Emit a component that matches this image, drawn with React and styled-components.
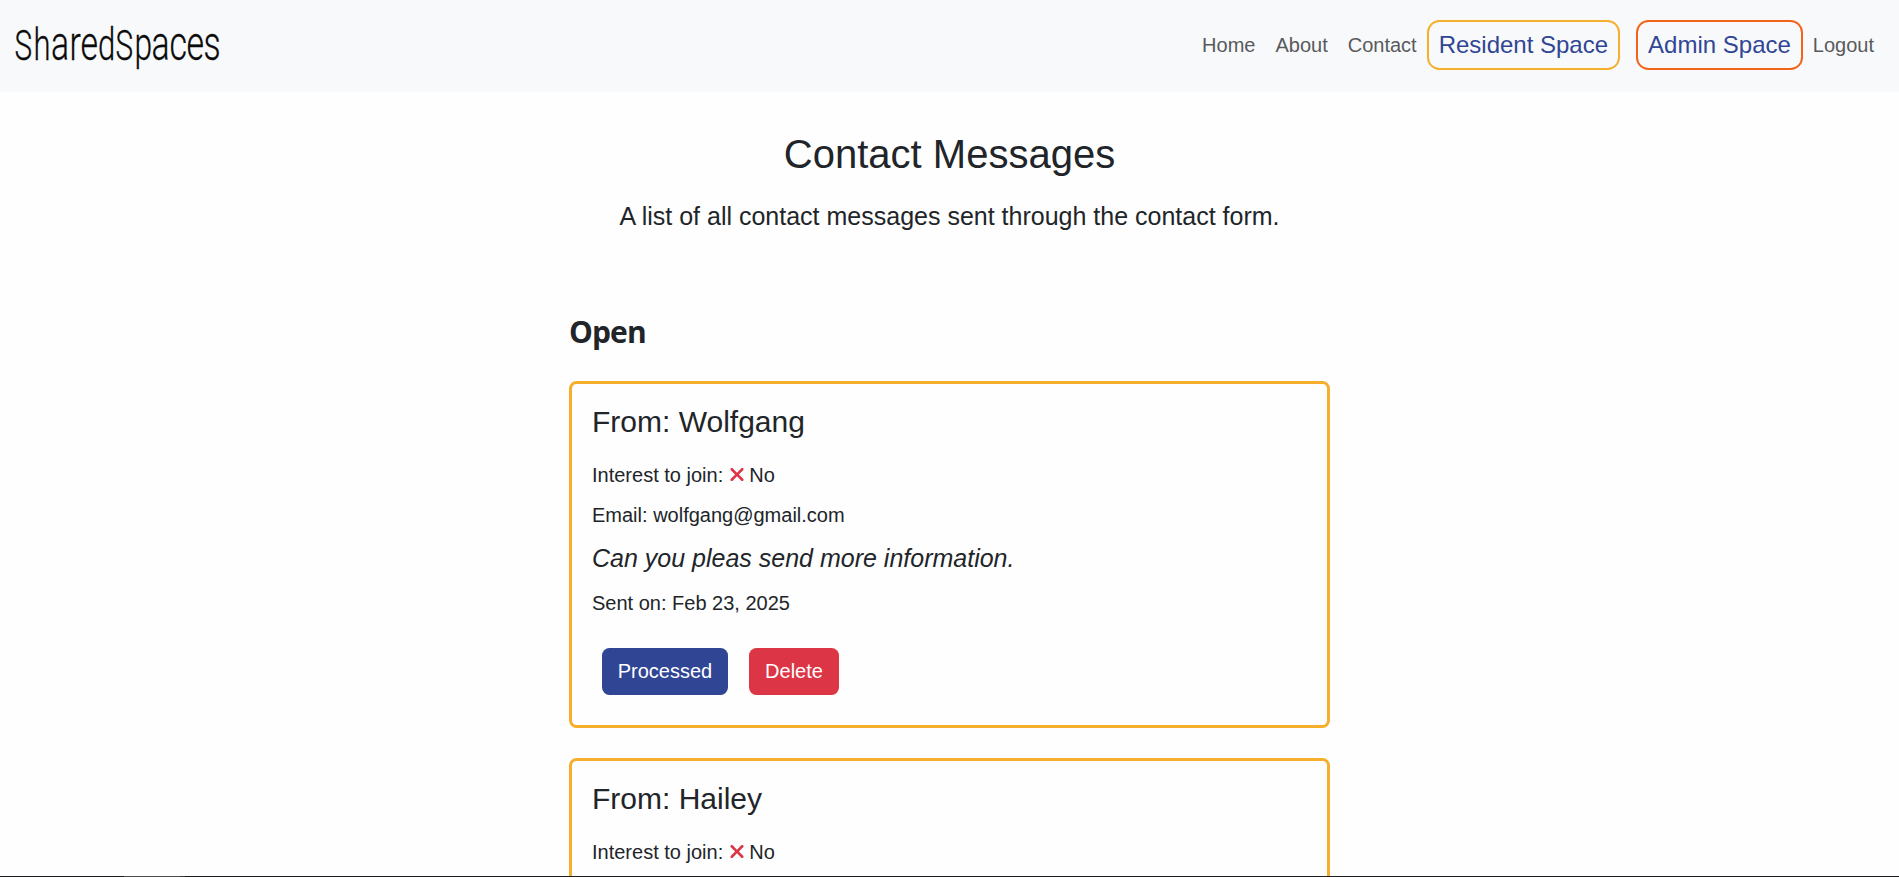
import React from "react";
import styled, { createGlobalStyle } from "styled-components";

const GlobalStyle = createGlobalStyle`
  * { box-sizing: border-box; }
  html, body { height: 100%; }
  body {
    margin: 0;
    overflow: hidden;
    background: #fefefe;
    color: #212529;
    font-family: "Liberation Sans", Arial, sans-serif;
    font-size: 20px;
    line-height: 30px;
  }
  h1, h2, h3, p { margin: 0; font-weight: 400; }
`;

const Page = styled.div`
  height: 877px;
  display: flex;
  flex-direction: column;
`;

const Navbar = styled.header`
  flex: none;
  height: 92px;
  padding: 20px 15px 22px;
  display: flex;
  justify-content: space-between;
  background: #f8f9fb;
`;

const Logo = styled.svg`
  display: block;
  width: 210px;
  height: 50px;
  overflow: visible;
  fill: #0b0b0b;
  stroke: #0b0b0b;
  stroke-width: 0.3px;
  font-family: Roboto, sans-serif;
  font-weight: 300;
`;

const NavLinks = styled.nav`
  display: flex;
  align-items: center;
`;

const NavLink = styled.a`
  padding: 0 10px;
  color: #595a5b;
`;

const SpaceLink = styled.a`
  height: 50px;
  padding: 0 10px;
  margin-right: ${(p) => p.$gap || 0}px;
  border: 2px solid ${(p) => p.$color};
  border-radius: 12.5px;
  color: #314595;
  font-size: 24px;
  line-height: 46px;
`;

const Main = styled.main`
  flex: 1;
  min-height: 0;
  overflow: hidden;
`;

const Intro = styled.section`
  padding-top: 38px;
  text-align: center;
`;

const Title = styled.h1`
  font-size: 40px;
  line-height: 48px;
  margin-bottom: 20px;
`;

const Lead = styled.p`
  font-size: 25px;
  line-height: 37px;
`;

const MessageList = styled.section`
  width: 761px;
  margin: 79px auto 0;
  display: flex;
  flex-direction: column;
  gap: 30px;
`;

const ListHeading = styled.h2`
  margin-bottom: 1px;
  font: 700 30px/36px "Open Sans", "Noto Sans", sans-serif;
  letter-spacing: -0.9px;
`;

const Card = styled.article`
  padding: 20px;
  border: 3px solid #f6ae2d;
  border-radius: 7.5px;
`;

const Sender = styled.h3`
  font-size: 30px;
  line-height: 36px;
  margin-bottom: 20px;
`;

const Detail = styled.p`
  margin-bottom: 10px;
`;

const MessageText = styled.p`
  font-size: 25px;
  font-style: italic;
  line-height: 37px;
  margin-bottom: 11px;
`;

const CrossIcon = styled.svg`
  width: 16px;
  height: 21px;
  margin-right: -1px;
  vertical-align: -3px;
  fill: #dc3545;
`;

const Actions = styled.div`
  display: flex;
  gap: 21px;
  padding: 20px 10px 10px;
`;

const Button = styled.button`
  width: ${(p) => p.$width}px;
  height: 47px;
  padding: 0 0 1px;
  border: 0;
  border-radius: 7.5px;
  background: ${(p) => p.$color};
  color: #fff;
  font: inherit;
`;

const BottomEdge = styled.footer`
  flex: none;
  height: 1px;
  background: linear-gradient(90deg, #1c1c1e 124px, #4d4d4d 124px 180px, #38383a 180px 185px, #1c1c1e 185px);
`;

const logoScale = 0.69;
const logoLetters = [
  ["S", 16, 43], ["h", 35, 45], ["a", 52.5, 49], ["r", 71, 49], ["e", 82, 49], ["d", 99.5, 45],
  ["S", 117, 43], ["p", 136, 46], ["a", 153, 49], ["c", 171, 49], ["e", 188, 49], ["s", 205, 49],
];

const messages = [
  { name: "Wolfgang", email: "wolfgang@gmail.com", text: "Can you pleas send more information.", date: "Feb 23, 2025" },
  { name: "Hailey" },
];

function Cross() {
  return (
    <CrossIcon viewBox="0 0 384 512" aria-hidden="true">
      <path d="M342.6 150.6c12.5-12.5 12.5-32.8 0-45.3s-32.8-12.5-45.3 0L192 210.7 86.6 105.4c-12.5-12.5-32.8-12.5-45.3 0s-12.5 32.8 0 45.3L146.7 256 41.4 361.4c-12.5 12.5-12.5 32.8 0 45.3s32.8 12.5 45.3 0L192 301.3 297.4 406.6c12.5 12.5 32.8 12.5 45.3 0s12.5-32.8 0-45.3L237.3 256 342.6 150.6z" />
    </CrossIcon>
  );
}

function Message({ name, email, text, date }) {
  return (
    <Card>
      <Sender>From: {name}</Sender>
      <Detail>Interest to join: <Cross /> No</Detail>
      {email && <Detail>Email: {email}</Detail>}
      {text && <MessageText>{text}</MessageText>}
      {date && (
        <>
          <Detail>Sent on: {date}</Detail>
          <Actions>
            <Button $width={126} $color="#314595">Processed</Button>
            <Button $width={90} $color="#dc3545">Delete</Button>
          </Actions>
        </>
      )}
    </Card>
  );
}

export default function App() {
  return (
    <Page>
      <GlobalStyle />
      <Navbar>
        <Logo viewBox="15 20 210 50" aria-label="SharedSpaces">
          <text y="60" transform={`scale(${logoScale} 1)`}>
            {logoLetters.map(([letter, x, size], i) => (
              <tspan key={i} x={(x - 1.5) / logoScale} fontSize={size}>{letter}</tspan>
            ))}
          </text>
        </Logo>
        <NavLinks>
          <NavLink>Home</NavLink>
          <NavLink>About</NavLink>
          <NavLink>Contact</NavLink>
          <SpaceLink $color="#f6ae2d" $gap={16}>Resident Space</SpaceLink>
          <SpaceLink $color="#f26419">Admin Space</SpaceLink>
          <NavLink>Logout</NavLink>
        </NavLinks>
      </Navbar>
      <Main>
        <Intro>
          <Title>Contact Messages</Title>
          <Lead>A list of all contact messages sent through the contact form.</Lead>
        </Intro>
        <MessageList>
          <ListHeading>Open</ListHeading>
          {messages.map((m) => <Message key={m.name} {...m} />)}
        </MessageList>
      </Main>
      <BottomEdge />
    </Page>
  );
}
